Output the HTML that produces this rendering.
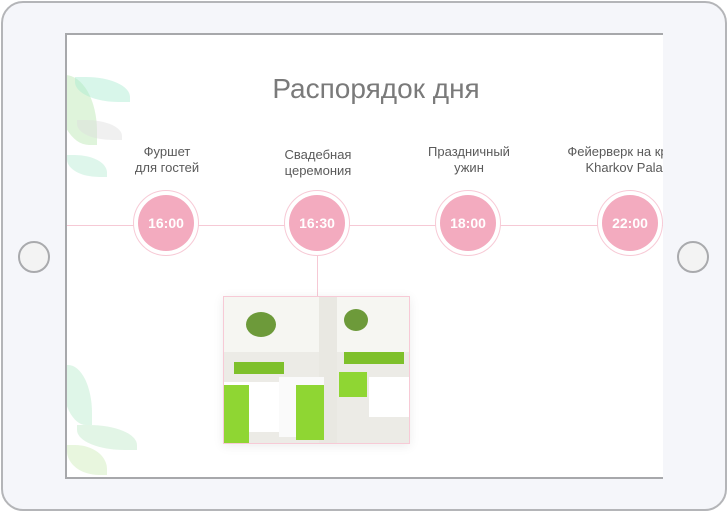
<!DOCTYPE html>
<html><head><meta charset="utf-8"><style>
*{margin:0;padding:0;box-sizing:border-box}
body{width:728px;height:513px;background:#fff;position:relative;overflow:hidden;font-family:"Liberation Sans",sans-serif}
.frame{position:absolute;left:1px;top:1px;width:726px;height:510px;border:2px solid #b4b5b8;border-radius:22px;background:#f5f6fa}
.btn{position:absolute;width:32px;height:32px;border:2px solid #a9aaad;border-radius:50%;background:#f3f3f3;top:241px}
.screen{position:absolute;left:65px;top:33px;width:598px;height:446px;border:2px solid #a7a8ab;border-right:none;background:#fff;overflow:hidden}
.title{position:absolute;left:0;width:618px;top:38px;text-align:center;font-size:28px;color:#7a7a7a}
.line{position:absolute;left:0;right:0;top:190px;height:1px;background:#f6c9d5}
.vline{position:absolute;left:250px;top:220px;width:1px;height:42px;background:#f6c9d5}
.c{position:absolute;width:66px;height:66px;border-radius:50%;border:1px solid #f7cad6;background:#fff;top:155px}
.c div{position:absolute;left:4px;top:4px;width:56px;height:56px;border-radius:50%;background:#f3abbf;color:#fff;font-weight:bold;font-size:14px;line-height:56px;text-align:center}
.lab{position:absolute;top:109px;width:140px;text-align:center;font-size:13px;line-height:16px;color:#5a5a5a;white-space:nowrap}
.leaf{position:absolute;border-radius:0 80% 0 80%;opacity:.45}
.img{position:absolute;left:156px;top:261px;width:187px;height:148px;border:1px solid #f7cad6;background:#f6f6f2;overflow:hidden;box-shadow:0 2px 10px rgba(0,0,0,.08)}
.img div{position:absolute}
</style></head><body>
<div class="frame"></div>
<div class="btn" style="left:18px"></div>
<div class="btn" style="left:677px"></div>
<div class="screen">
 <div class="leaf" style="left:-10px;top:40px;width:40px;height:70px;background:#b9e6b0"></div>
 <div class="leaf" style="left:8px;top:42px;width:55px;height:25px;background:#a8ecd0"></div>
 <div class="leaf" style="left:10px;top:85px;width:45px;height:20px;background:#ddd"></div>
 <div class="leaf" style="left:0;top:120px;width:40px;height:22px;background:#b6ecd2"></div>
 <div class="leaf" style="left:-5px;top:330px;width:30px;height:60px;background:#b9eccb"></div>
 <div class="leaf" style="left:10px;top:390px;width:60px;height:25px;background:#bfe9c8"></div>
 <div class="leaf" style="left:0;top:410px;width:40px;height:30px;background:#cdebb6"></div>
 <div class="title">Распорядок дня</div>
 <div class="line"></div>
 <div class="vline"></div>
 <div class="lab" style="left:30px">Фуршет<br>для гостей</div>
 <div class="lab" style="left:181px;top:112px">Свадебная<br>церемония</div>
 <div class="lab" style="left:332px">Праздничный<br>ужин</div>
 <div class="lab" style="left:494px">Фейерверк на крыше<br>Kharkov Palace</div>
 <div class="c" style="left:66px"><div>16:00</div></div>
 <div class="c" style="left:217px"><div>16:30</div></div>
 <div class="c" style="left:368px"><div>18:00</div></div>
 <div class="c" style="left:530px"><div>22:00</div></div>
 <div class="img">
  <div style="left:0;top:55px;width:187px;height:93px;background:#ecebe6"></div>
  <div style="left:95px;top:0;width:18px;height:148px;background:#e9e8e2"></div>
  <div style="left:22px;top:15px;width:30px;height:25px;border-radius:50%;background:#6d9a3a"></div>
  <div style="left:120px;top:12px;width:24px;height:22px;border-radius:50%;background:#6d9a3a"></div>
  <div style="left:0;top:85px;width:60px;height:50px;background:#fff"></div>
  <div style="left:55px;top:80px;width:45px;height:60px;background:#fafafa"></div>
  <div style="left:0;top:88px;width:25px;height:60px;background:#8fd633"></div>
  <div style="left:72px;top:88px;width:28px;height:55px;background:#8fd633"></div>
  <div style="left:115px;top:75px;width:28px;height:25px;background:#8fd633"></div>
  <div style="left:10px;top:65px;width:50px;height:12px;background:#7ec02b"></div>
  <div style="left:120px;top:55px;width:60px;height:12px;background:#7ec02b"></div>
  <div style="left:145px;top:80px;width:40px;height:40px;background:#fff"></div>
 </div>
</div>
</body></html>
